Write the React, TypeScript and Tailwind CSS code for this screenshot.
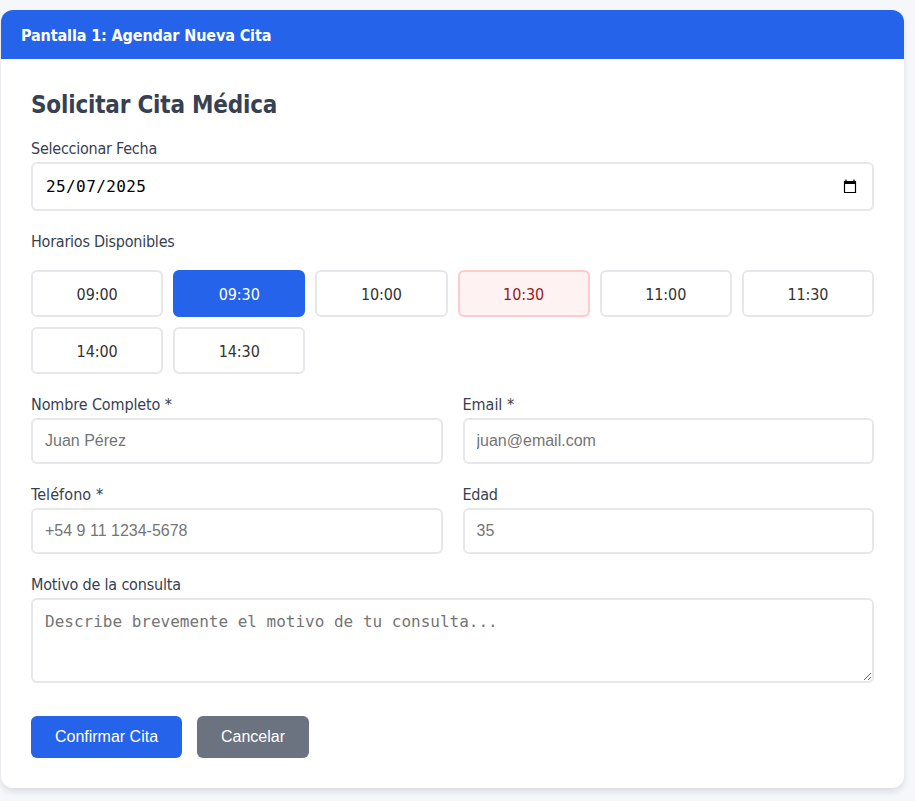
import type { ReactNode } from "react";

type SlotState = "free" | "selected" | "busy";

const slots: { time: string; state: SlotState }[] = [
  { time: "09:00", state: "free" },
  { time: "09:30", state: "selected" },
  { time: "10:00", state: "free" },
  { time: "10:30", state: "busy" },
  { time: "11:00", state: "free" },
  { time: "11:30", state: "free" },
  { time: "14:00", state: "free" },
  { time: "14:30", state: "free" },
];

const slotStyles: Record<SlotState, string> = {
  free: "border-[#e5e7eb] bg-white text-[#333333]",
  selected: "border-[#2563eb] bg-[#2563eb] text-white",
  busy: "border-[#fecaca] bg-[#fef2f2] text-[#991b1b]",
};

function Label({ children, tracking }: { children: ReactNode; tracking: string }) {
  return (
    <div className={`h-5 whitespace-nowrap text-[16px] leading-[22px] text-[#374151] ${tracking}`}>{children}</div>
  );
}

function Field({ label, placeholder, tracking }: { label: string; placeholder: string; tracking: string }) {
  return (
    <label className="flex flex-col gap-1">
      <Label tracking={tracking}>{label}</Label>
      <input
        className="h-[46px] w-full rounded-md border-2 border-[#e5e7eb] bg-white px-3 font-['Liberation_Sans',Arial,sans-serif] text-[16px] placeholder:text-[#757575]"
        placeholder={placeholder}
      />
    </label>
  );
}

export default function App() {
  return (
    <div className="h-[801px] overflow-hidden bg-[#f5f7fa] pt-[10px] pl-px font-['DejaVu_Sans_Condensed','DejaVu_Sans',sans-serif] [font-stretch:condensed]">
      <div className="h-[778px] w-[903px] overflow-hidden rounded-xl bg-white shadow-[0_4px_6px_rgba(0,0,0,0.1)]">
        <div className="flex h-[49px] items-center bg-[#2563eb] px-5 pt-[2px] text-[16px] font-bold tracking-[-0.12px] text-white">
          Pantalla 1: Agendar Nueva Cita
        </div>
        <div className="p-[30px]">
          <h2 className="mb-[19px] h-[30px] whitespace-nowrap text-[24px] leading-[32px] font-bold tracking-[-0.2px] text-[#374151]">
            Solicitar Cita Médica
          </h2>

          <Label tracking="tracking-[-0.24px]">Seleccionar Fecha</Label>
          <div className="mt-1 mb-5 flex h-[49px] items-center justify-between rounded-md border-2 border-[#e5e7eb] pr-[15px] pl-[13px]">
            <span className="font-['DejaVu_Sans_Mono',monospace] text-[16px] tracking-[0.4px] text-black">25/07/2025</span>
            <svg className="h-[15px] w-[14px]" viewBox="0 0 14 15" fill="none">
              <path d="M1.5 2.5H12.5V13.5H1.5Z" stroke="#000" strokeWidth="1.2" />
              <path d="M1 2H13V5H1Z" fill="#000" />
              <path d="M3 0.5V3M11 0.5V3" stroke="#000" strokeWidth="1.2" />
            </svg>
          </div>

          <Label tracking="tracking-[-0.24px]">Horarios Disponibles</Label>
          <div className="mt-[19px] mb-5 grid grid-cols-6 gap-[10px]">
            {slots.map((slot) => (
              <button
                key={slot.time}
                className={`h-[47px] rounded-md border-2 pt-[2px] text-[16px] tracking-[-0.1px] ${slotStyles[slot.state]}`}
              >
                {slot.time}
              </button>
            ))}
          </div>

          <div className="mb-5 grid grid-cols-2 gap-5">
            <Field label="Nombre Completo *" placeholder="Juan Pérez" tracking="tracking-[-0.12px]" />
            <Field label="Email *" placeholder="juan@email.com" tracking="tracking-[-0.02px]" />
            <Field label="Teléfono *" placeholder="+54 9 11 1234-5678" tracking="tracking-[0.08px]" />
            <Field label="Edad" placeholder="35" tracking="tracking-[-0.3px]" />
          </div>

          <Label tracking="tracking-[-0.18px]">Motivo de la consulta</Label>
          <textarea
            className="mt-1 block h-[85px] w-full resize-y rounded-md border-2 border-[#e5e7eb] px-3 pt-3 pb-3 font-['DejaVu_Sans_Mono',monospace] text-[16px] leading-[19px] placeholder:text-[#757575]"
            placeholder="Describe brevemente el motivo de tu consulta..."
          />

          <div className="mt-[33px] flex gap-[15px] font-['Liberation_Sans',Arial,sans-serif] text-[16px] text-white">
            <button className="h-[42px] w-[151px] rounded-md bg-[#2563eb]">Confirmar Cita</button>
            <button className="h-[42px] w-[112px] rounded-md bg-[#6b7280]">Cancelar</button>
          </div>
        </div>
      </div>
    </div>
  );
}
